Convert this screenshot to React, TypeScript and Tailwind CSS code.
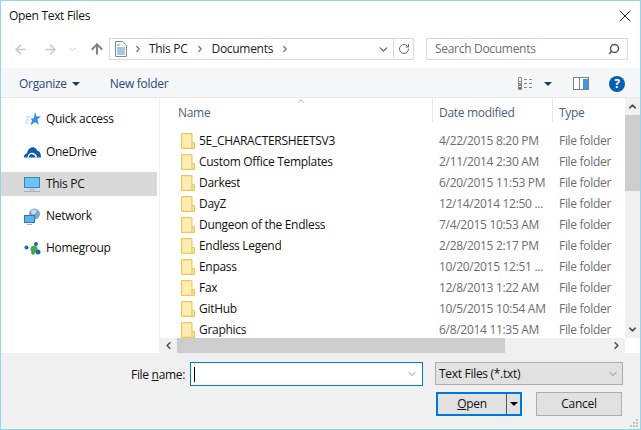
import { ArrowLeft, ArrowRight, ArrowUp, ChevronDown, ChevronLeft, ChevronRight, ChevronUp, RotateCw, Search, X } from "lucide-react";

const files = [
  ["5E_CHARACTERSHEETSV3", "4/22/2015 8:20 PM"],
  ["Custom Office Templates", "2/11/2014 2:30 AM"],
  ["Darkest", "6/20/2015 11:53 PM"],
  ["DayZ", "12/14/2014 12:50 ..."],
  ["Dungeon of the Endless", "7/4/2015 10:53 AM"],
  ["Endless Legend", "2/28/2015 2:17 PM"],
  ["Enpass", "10/20/2015 12:51 ..."],
  ["Fax", "12/8/2013 1:22 AM"],
  ["GitHub", "10/5/2015 10:54 AM"],
  ["Graphics", "6/8/2014 11:35 AM"],
];

function Folder() {
  return (
    <svg width="14" height="16" viewBox="0 0 14 16" className="shrink-0">
      <path d="M.5.5h10.500v9h2.500v6H.5z" fill="#fde38f" stroke="#ebc55f" />
      <path d="M2 2h8v12H2z" fill="#feeeb5" />
      <path d="M11 10v5.500" stroke="#ebc55f" />
    </svg>
  );
}

function Star() {
  return (
    <svg width="16" height="15" viewBox="0 0 16 15">
      <path d="M10 0l1.500 4.500H16l-3.600 3 1.400 5.500-3.800-3-4.500 3.500 1.600-5.500-2-1.500h3.600z" fill="#2f8fe6" />
      <path d="M1 5h4M1 8h3M0 11h3" stroke="#9ccbf2" />
    </svg>
  );
}

function Cloud() {
  return (
    <svg width="17" height="11" viewBox="0 0 17 11">
      <path d="M0 10.500c0-2.500 1-4 3-4.300C4 2 7-.5 10 .5c1.700.5 2.800 1.700 3.200 3.300 2.300 0 3.800 2.500 3.800 6.700z" fill="#0f5ca8" />
      <path d="M4 10.500c.5-3 2.500-4.500 4.500-4s3.500 2 4 4" fill="none" stroke="#fff" strokeWidth="1.300" />
    </svg>
  );
}

function Monitor() {
  return (
    <svg width="17" height="15" viewBox="0 0 17 15">
      <rect x=".5" y=".5" width="15" height="10" fill="#6cc4f5" stroke="#3d7fb5" />
      <path d="M5 12.500h6" stroke="#a8b4be" />
      <path d="M0 14.500h16" stroke="#9eb0c0" />
    </svg>
  );
}

function Network() {
  return (
    <svg width="17" height="17" viewBox="0 0 17 17">
      <circle cx="10.500" cy="6" r="5.500" fill="#7aa8cf" />
      <path d="M7 3c2-2 5-2 6 0l-2 3-3 .5z" fill="#c7dceb" />
      <rect x=".5" y="7.500" width="10" height="7" fill="#58b5ee" stroke="#2f76b0" />
      <path d="M3 16.500h5" stroke="#9eb0c0" />
    </svg>
  );
}

function Homegroup() {
  return (
    <svg width="17" height="13" viewBox="0 0 17 13">
      <circle cx="2.500" cy="5.500" r="2" fill="#1668b8" />
      <circle cx="12" cy="2" r="2" fill="#1668b8" />
      <circle cx="10" cy="7" r="3.500" fill="#4fa84a" />
      <circle cx="14" cy="10" r="2.500" fill="#1668b8" />
      <circle cx="9" cy="11" r="1.800" fill="#3c9a46" />
    </svg>
  );
}

function DocIcon() {
  return (
    <svg width="12" height="16" viewBox="0 0 12 16">
      <path d="M.5.5h7l4 4v11H.5z" fill="#fff" stroke="#7f8a96" />
      <path d="M2 4h3M2 7h8M2 9h8M2 11h8M2 13h8" stroke="#4a90c8" />
    </svg>
  );
}

function ViewsIcon() {
  return (
    <svg width="16" height="13" viewBox="0 0 16 13">
      <path d="M.5.500h3v12h-3zM.5 4.500h3M.5 8.500h3" fill="#fff" stroke="#8d8d8d" />
      <path d="M6 2.500h3M11 2.500h3M6 6.500h3M11 6.500h3M6 10.500h3M11 10.500h3" stroke="#8a8a8a" />
      <rect x="1" y="10" width="2" height="2" fill="#d0404a" />
      <rect x="1" y="6" width="2" height="2" fill="#5a9ad6" />
    </svg>
  );
}

function PaneIcon() {
  return (
    <svg width="16" height="13" viewBox="0 0 16 13">
      <rect x=".5" y=".5" width="15" height="12" fill="#fff" stroke="#7f7f7f" />
      <path d="M6.500 1v11" stroke="#7f7f7f" />
      <rect x="10" y="2" width="5" height="10" fill="#3d97e0" />
    </svg>
  );
}

function Caret({ color = "#1f3a5f" }: { color?: string }) {
  return <span className="block h-0 w-0 border-x-[4px] border-t-[4px] border-x-transparent" style={{ borderTopColor: color }} />;
}

function NavItem({ icon, label, active }: { icon: React.ReactNode; label: string; active?: boolean }) {
  return (
    <div className={`mr-[2px] flex h-6 items-center ${active ? "bg-[#d9d9d9]" : ""}`}>
      <div className="flex w-[45px] shrink-0 justify-end pr-[5px]">{icon}</div>
      <span className="text-[#111]">{label}</span>
    </div>
  );
}

export default function App() {
  return (
    <div className="flex h-[430px] w-[641px] flex-col overflow-hidden border border-[#8fd8ee] bg-white font-['Open_Sans',sans-serif] text-[12px] tracking-[-0.3px] text-[#111]">
      {/* Title */}
      <div className="flex h-[29px] shrink-0 items-center justify-between pl-2 pr-[5px]">
        <span>Open Text Files</span>
        <X className="h-5 w-5 text-[#222]" strokeWidth={1.2} />
      </div>

      {/* Address row */}
      <div className="mt-[8px] flex h-[22px] shrink-0 items-center">
        <div className="flex w-[108px] shrink-0 items-center pl-[12px]">
          <ArrowLeft className="h-[15px] w-[15px] text-[#c8c8c8]" strokeWidth={2.5} />
          <ArrowRight className="ml-[15px] h-[15px] w-[15px] text-[#c8c8c8]" strokeWidth={2.5} />
          <ChevronDown className="ml-[10px] h-[9px] w-[9px] text-[#c8c8c8]" strokeWidth={2.5} />
          <ArrowUp className="ml-[12px] h-[16px] w-[16px] text-[#808080]" strokeWidth={3} />
        </div>
        <div className="flex h-[22px] w-[305px] items-center border border-[#d9d9d9]">
          <div className="ml-[5px]"><DocIcon /></div>
          <ChevronRight className="ml-[6px] h-[10px] w-[10px] text-[#777]" strokeWidth={3} />
          <span className="ml-[6px] text-[#222]">This PC</span>
          <ChevronRight className="ml-[7px] h-[10px] w-[10px] text-[#777]" strokeWidth={3} />
          <span className="ml-[7px] text-[#222]">Documents</span>
          <ChevronRight className="ml-[7px] h-[10px] w-[10px] text-[#777]" strokeWidth={3} />
          <div className="ml-auto flex h-full items-center">
            <ChevronDown className="mr-[3px] h-[13px] w-[13px] text-[#666]" strokeWidth={2.5} />
            <div className="flex h-full w-[20px] items-center justify-center border-l border-[#d9d9d9]">
              <RotateCw className="h-[12px] w-[12px] text-[#666]" strokeWidth={2} />
            </div>
          </div>
        </div>
        <div className="ml-[12px] flex h-[22px] w-[202px] items-center justify-between border border-[#d9d9d9] pl-[8px] pr-[7px] text-[#6d6d6d]">
          <span>Search Documents</span>
          <Search className="h-[12px] w-[12px] -scale-x-100 text-[#555]" strokeWidth={3} />
        </div>
      </div>

      {/* Toolbar */}
      <div className="mt-[8px] flex h-[30px] shrink-0 items-center border-b border-[#e6e8ea] bg-[#f5f6f7] pl-[18px] pr-[15px] pt-[2px] text-[#2a4a7f]">
        <span>Organize</span>
        <span className="ml-[5px]"><Caret /></span>
        <span className="ml-[30px]">New folder</span>
        <div className="ml-auto flex items-center">
          <ViewsIcon />
          <span className="ml-[10px]"><Caret /></span>
          <span className="ml-[21px]"><PaneIcon /></span>
          <span className="ml-[20px] flex h-[16px] w-[16px] items-center justify-center rounded-full bg-[#0a5eb0] text-[12px] font-bold text-white">?</span>
        </div>
      </div>

      {/* Main */}
      <div className="flex min-h-0 flex-1">
        <div className="w-[159px] shrink-0 border-r border-[#f0f0f0] pt-[9px]">
          <NavItem icon={<Star />} label="Quick access" />
          <div className="mt-[9px]"><NavItem icon={<Cloud />} label="OneDrive" /></div>
          <div className="mt-[8px]"><NavItem icon={<Monitor />} label="This PC" active /></div>
          <div className="mt-[8px]"><NavItem icon={<Network />} label="Network" /></div>
          <div className="mt-[8px]"><NavItem icon={<Homegroup />} label="Homegroup" /></div>
        </div>

        <div className="flex min-w-0 flex-1 flex-col">
          <div className="flex min-h-0 flex-1">
            <div className="relative min-w-0 flex-1 overflow-hidden">
              <ChevronUp className="absolute left-[136px] top-[-2px] h-[10px] w-[10px] text-[#777]" strokeWidth={1.5} />
              <div className="flex h-[24px] items-center text-[#4c607a]">
                <div className="h-full w-[272px] pl-[18px] leading-[30px]">Name</div>
                <div className="h-full w-[120px] border-l border-[#e5e5e5] pl-[6px] leading-[30px]">Date modified</div>
                <div className="h-full flex-1 border-l border-[#e5e5e5] pl-[6px] leading-[30px]">Type</div>
              </div>
              <div className="pt-[8px]">
                {files.map(([name, date]) => (
                  <div key={name} className="flex h-[21.1px] items-center">
                    <div className="flex w-[272px] items-center pl-[21px]">
                      <Folder />
                      <span className="ml-[4px] truncate text-[#111]">{name}</span>
                    </div>
                    <div className="w-[120px] pl-[7px] text-[#6d6d6d]">{date}</div>
                    <div className="pl-[7px] text-[#6d6d6d]">File folder</div>
                  </div>
                ))}
              </div>
            </div>
            {/* vertical scrollbar */}
            <div className="flex w-[15px] shrink-0 flex-col bg-[#f0f0f0]">
              <div className="flex h-[17px] shrink-0 items-center justify-center">
                <ChevronUp className="h-[11px] w-[11px] text-[#505050]" strokeWidth={3.5} />
              </div>
              <div className="h-[76px] shrink-0 bg-[#cdcdcd]" />
              <div className="mt-auto flex h-[17px] shrink-0 items-center justify-center">
                <ChevronDown className="h-[11px] w-[11px] text-[#505050]" strokeWidth={3.5} />
              </div>
            </div>
          </div>
          {/* horizontal scrollbar */}
          <div className="flex h-[15px] shrink-0">
            <div className="flex flex-1 bg-[#f0f0f0]">
              <div className="flex w-[17px] shrink-0 items-center justify-center">
                <ChevronLeft className="h-[11px] w-[11px] text-[#505050]" strokeWidth={3.5} />
              </div>
              <div className="w-[328px] shrink-0 bg-[#cdcdcd]" />
              <div className="ml-auto flex w-[17px] shrink-0 items-center justify-center">
                <ChevronRight className="h-[11px] w-[11px] text-[#505050]" strokeWidth={3.5} />
              </div>
            </div>
            <div className="w-[15px] shrink-0 bg-white" />
          </div>
        </div>
      </div>

      {/* Footer */}
      <div className="relative h-[76px] shrink-0 bg-[#f0f0f0] pl-[130px] pt-[9px]">
        <div className="flex items-start">
          <span className="mt-[4px] w-[59px]">File <span className="underline">n</span>ame:</span>
          <div className="flex h-[24px] w-[233px] items-center justify-between border border-[#0078d7] bg-white pl-[3px] pr-[4px]">
            <span className="h-[15px] w-px bg-black" />
            <ChevronDown className="h-[12px] w-[12px] text-[#666]" strokeWidth={1.5} />
          </div>
          <div className="ml-[12px] flex h-[23px] w-[188px] items-center justify-between border border-[#adadad] bg-[#e1e1e1] pl-[3px] pr-[3px]">
            <span>Text Files (*.txt)</span>
            <ChevronDown className="h-[12px] w-[12px] text-[#666]" strokeWidth={1.5} />
          </div>
        </div>
        <div className="ml-[305px] mt-[6px] flex">
          <div className="flex h-[24px] w-[86px] items-center border-2 border-[#0078d7] bg-[#e1e1e1]">
            <span className="flex-1 text-center"><span className="underline">O</span>pen</span>
            <span className="h-full w-px bg-[#555]" />
            <span className="flex w-[13px] justify-center"><Caret color="#000" /></span>
          </div>
          <div className="ml-[14px] flex h-[24px] w-[86px] items-center justify-center border border-[#adadad] bg-[#e1e1e1]">Cancel</div>
        </div>
        {/* resize grip */}
        <svg width="10" height="10" viewBox="0 0 10 10" className="absolute bottom-[1px] right-[1px]">
          <path d="M7 1h2v2H7zM4 4h2v2H4zM7 4h2v2H7zM1 7h2v2H1zM4 7h2v2H4zM7 7h2v2H7z" fill="#c4c4c4" />
        </svg>
      </div>
    </div>
  );
}
